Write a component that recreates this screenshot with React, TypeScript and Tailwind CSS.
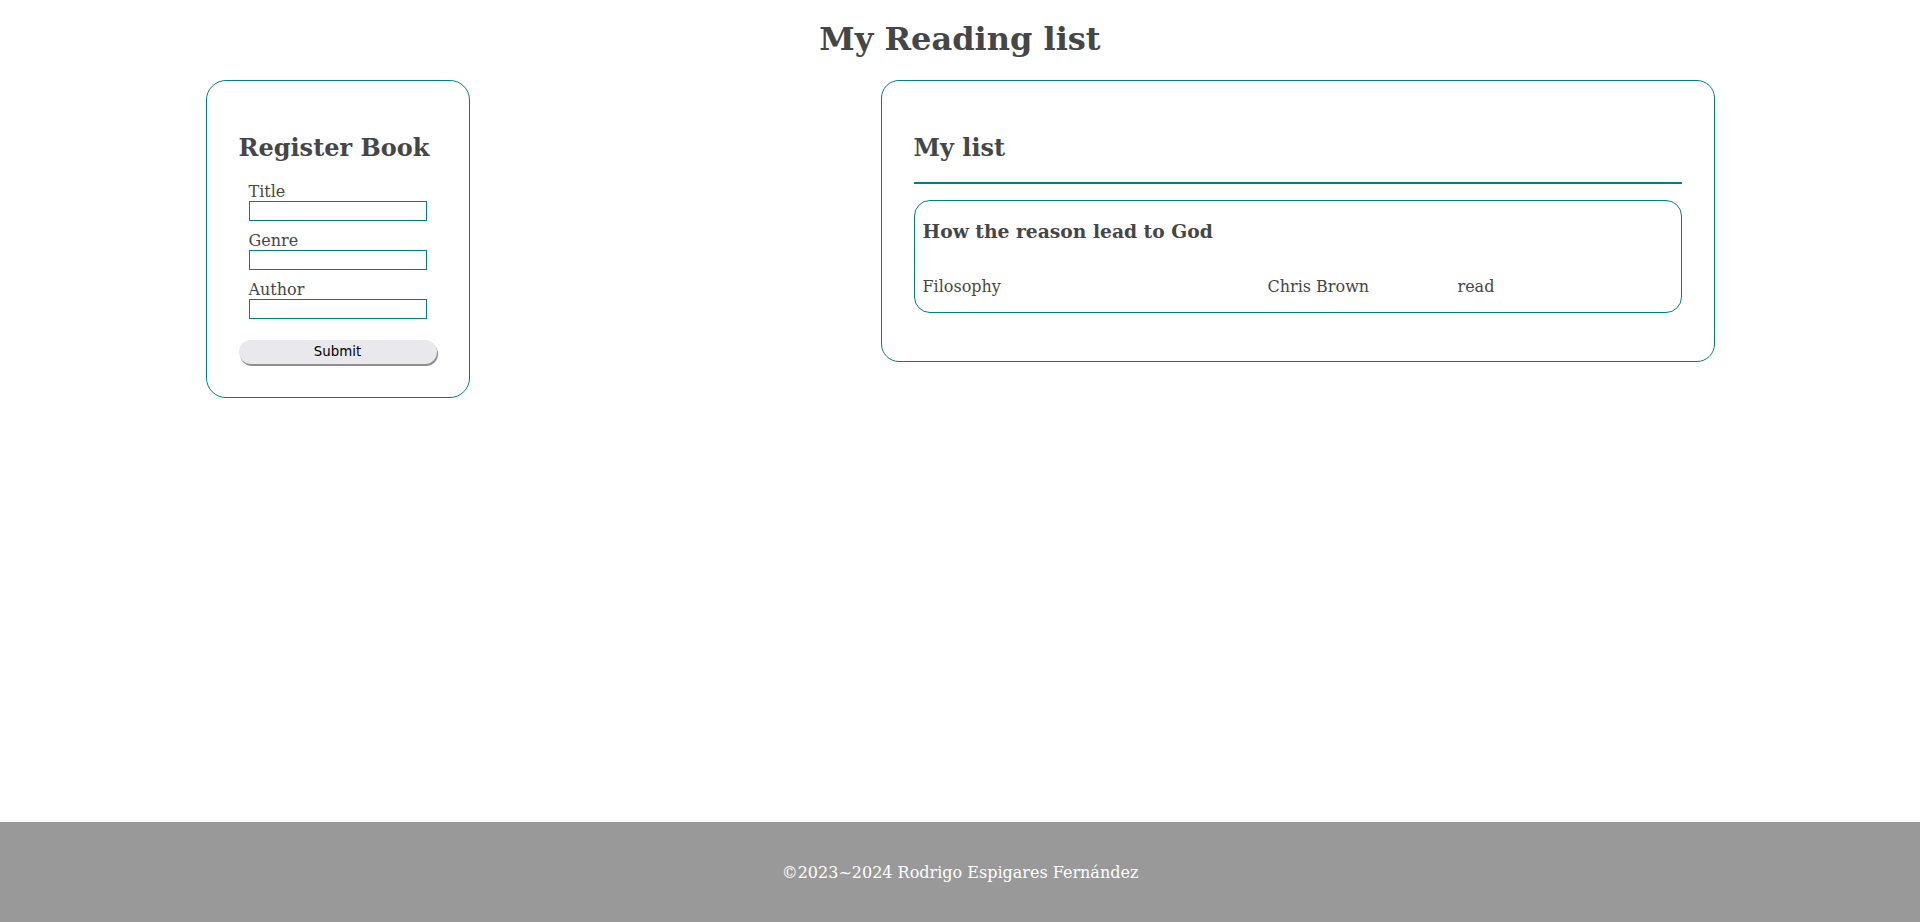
const book = {
  title: 'How the reason lead to God',
  genre: 'Filosophy',
  author: 'Chris Brown',
  status: 'read',
}

const fields = ['Title', 'Genre', 'Author']

export default function App() {
  return (
    <div className="min-h-screen flex flex-col bg-white text-[#464646] font-['DejaVu_Serif',serif]">
      <h1 className="pt-[21px] text-center text-[32px] leading-[37px] font-bold">My Reading list</h1>

      <main className="flex-1 flex justify-around items-start mt-[22px]">
        {/* Register form */}
        <div className="w-[264px] border border-[#008080] rounded-[20px] px-[32px] pt-[32px] pb-[33px]">
          <h2 className="mt-[21px] mb-[20px] text-[24px] leading-[28px] font-bold">Register Book</h2>
          <form className="flex flex-col" onSubmit={(e) => e.preventDefault()}>
            {fields.map((f) => (
              <div key={f} className="ml-[10px] mb-[10px] flex flex-col items-start">
                <label className="text-[16px] leading-[19px]">{f}</label>
                <input
                  type="text"
                  className="w-[178px] h-[20px] border border-[#008080] bg-white outline-none"
                />
              </div>
            ))}
            <button
              type="submit"
              className="mt-[11px] w-full h-[24px] rounded-full bg-[#e9e9ed] shadow-[1px_2px_0_#8f8f8f] text-black text-[13.33px] font-['DejaVu_Sans',sans-serif]"
            >
              Submit
            </button>
          </form>
        </div>

        {/* List */}
        <div className="w-[834px] border border-[#008080] rounded-[18px] p-[32px]">
          <h2 className="mt-[21px] mb-[20px] text-[24px] leading-[28px] font-bold">My list</h2>
          <div className="border-t-2 border-[#008080]"></div>
          <div className="mt-[16px] mb-[16px] border border-[#008080] rounded-[16px] px-[8px]">
            <h3 className="mt-[18.7px] text-[18.72px] leading-[22px] font-bold">{book.title}</h3>
            <div className="mt-[35.7px] mb-[16px] flex text-[16px] leading-[19px]">
              <span className="w-[345px]">{book.genre}</span>
              <span className="w-[190px]">{book.author}</span>
              <span>{book.status}</span>
            </div>
          </div>
        </div>
      </main>

      <footer className="h-[100px] bg-[#999999] text-white flex items-center justify-center text-[16px] leading-[19px]">
        ©2023~2024 Rodrigo Espigares Fernández
      </footer>
    </div>
  )
}
